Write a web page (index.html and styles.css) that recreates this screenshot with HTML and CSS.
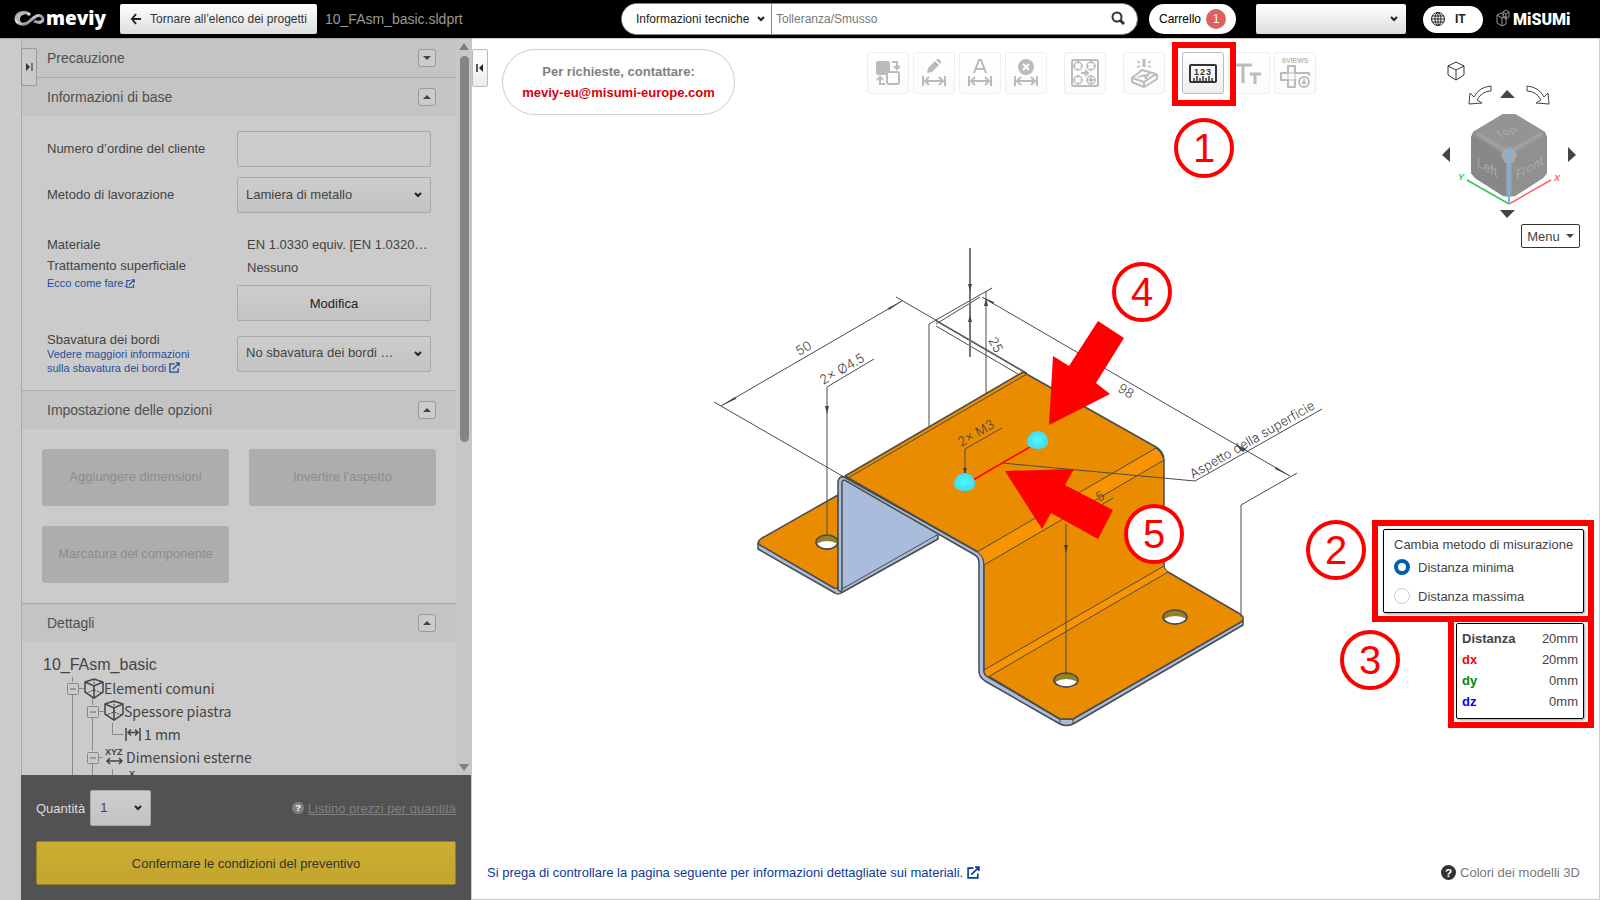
FILE: index.html
```html
<!DOCTYPE html>
<html lang="it">

<head>
  <meta charset="UTF-8" />
  <meta name="viewport" content="width=device-width, initial-scale=1.0" />
  <title>meviy - 10_FAsm_basic.sldprt</title>
  <link rel="stylesheet" href="styles.css">
</head>

<body>
  <!-- Header -->
  <header class="topbar">
    <a class="logo" href="#" aria-label="meviy">
      <svg width="98" height="28" viewBox="0 0 98 28">
        <defs>
          <linearGradient id="silver" x1="0" y1="0" x2="1" y2="1">
            <stop offset="0" stop-color="#77747c" />
            <stop offset="0.4" stop-color="#f0eef2" />
            <stop offset="0.7" stop-color="#8d8a92" />
            <stop offset="1" stop-color="#e4e2e6" />
          </linearGradient>
        </defs>
        <path d="M16 10C12 6 3 6 2 13c0 7 9 8 14 3s9-7 12-4c3 4-2 7-8 4" fill="none" stroke="url(#silver)" stroke-width="3" />
        <path d="M13 9C8 5 1 8 2 14c1 3 3 5 6 4-4-3-2-9 5-9z" fill="#b9b6be" />
        <text x="32" y="20" class="logo-text">meviy</text>
      </svg>
    </a>
    <button class="back" type="button">
      <svg width="12" height="12" viewBox="0 0 12 12"><path d="M6 1L2 6l4 5M2 6h9" fill="none" stroke="#222" stroke-width="2" /></svg>
      Tornare all’elenco dei progetti
    </button>
    <span class="file-name">10_FAsm_basic.sldprt</span>

    <form class="search">
      <select class="select" aria-label="Categoria">
        <option>Informazioni tecniche</option>
      </select>
      <input type="text" placeholder="Tolleranza/Smusso" aria-label="Cerca" />
      <button type="button" aria-label="Cerca">
        <svg width="14" height="14" viewBox="0 0 14 14"><circle cx="6" cy="6" r="4.5" fill="none" stroke="#333" stroke-width="2" /><path d="M9 9l4 4" stroke="#333" stroke-width="3" /></svg>
      </button>
    </form>

    <button class="cart" type="button">Carrello <span class="badge">1</span></button>
    <select class="select account" aria-label="Account">
      <option></option>
    </select>
    <button class="lang" type="button">
      <svg width="14" height="14" viewBox="0 0 14 14" fill="none" stroke="#222"><circle cx="7" cy="7" r="6.5" /><ellipse cx="7" cy="7" rx="3" ry="6.5" /><path d="M7 0v14M0 7h14M1 4h12M1 10h12" /></svg>
      IT
    </button>
    <a class="misumi" href="#" aria-label="MiSUMi">
      <svg width="84" height="24" viewBox="0 0 84 24">
        <path d="M1 8l5 3v8l-5-3zM6 11l4-2v8l-4 2M1 8l4-2 3 2M7 5l3-2 3 2v5l-3 2-3-2zM7 5l3 2 3-2M10 7v5" fill="none" stroke="#999" />
        <text x="17" y="18" class="misumi-text">MiSUMi</text>
      </svg>
    </a>
  </header>

  <main>
    <!-- Side panel -->
    <aside class="sidebar">
      <div class="panel-wrap">
        <button class="tab tab-left" type="button" aria-label="Espandi">
          <svg width="8" height="8" viewBox="0 0 8 8"><path d="M1 0l4 4-4 4z" fill="#333" /><path d="M7 0v8" stroke="#777" stroke-width="2" /></svg>
        </button>
        <div class="panel">
          <section>
            <h2>Precauzione <button class="toggle closed" type="button" aria-label="Apri"></button></h2>
          </section>

          <section>
            <h2>Informazioni di base <button class="toggle" type="button" aria-label="Chiudi"></button></h2>
            <div class="form">
              <div class="row">
                <label for="orderNo">Numero d’ordine del cliente</label>
                <input id="orderNo" type="text" />
              </div>
              <div class="row">
                <label for="method">Metodo di lavorazione</label>
                <select id="method" class="select">
                  <option>Lamiera di metallo</option>
                </select>
              </div>
              <div class="row material">
                <div class="names">
                  <p>Materiale</p>
                  <p>Trattamento superficiale</p>
                  <a href="#">Ecco come fare.<svg class="ext" width="9" height="9" viewBox="0 0 12 12"><use href="#ext" /></svg></a>
                </div>
                <div class="values">
                  <p>EN 1.0330 equiv. [EN 1.0320…</p>
                  <p>Nessuno</p>
                  <button class="modify" type="button">Modifica</button>
                </div>
              </div>
              <div class="row burr">
                <div>
                  <label for="burr">Sbavatura dei bordi</label>
                  <a href="#">Vedere maggiori informazioni sulla sbavatura dei bordi <svg class="ext" width="11" height="11" viewBox="0 0 12 12"><use href="#ext" /></svg></a>
                </div>
                <select id="burr" class="select">
                  <option>No sbavatura dei bordi …</option>
                </select>
              </div>
            </div>
          </section>

          <section>
            <h2>Impostazione delle opzioni <button class="toggle" type="button" aria-label="Chiudi"></button></h2>
            <div class="options">
              <button type="button" disabled>Aggiungere dimensioni</button>
              <button type="button" disabled>Invertire l’aspetto</button>
              <button type="button" disabled>Marcatura del componente</button>
            </div>
          </section>

          <section>
            <h2>Dettagli <button class="toggle" type="button" aria-label="Chiudi"></button></h2>
            <div class="tree">
              <p class="tree-title">10_FAsm_basic</p>
              <ul>
                <li>
                  <svg width="61" height="23"><path class="line" d="M29.5 0v5M29.5 18v5M36 11.5h5M49.5 20v3" /><use href="#minus" x="24" y="6" /><use href="#cube" x="41" y="1" /></svg>Elementi comuni
                </li>
                <li>
                  <svg width="81" height="23"><path class="line" d="M29.5 0v23M49.5 0v5M49.5 18v5M56 11.5h5" /><use href="#minus" x="44" y="6" /><use href="#cube" x="61" y="0" /></svg>Spessore piastra
                </li>
                <li>
                  <svg width="101" height="23"><path class="line" d="M29.5 0v23M49.5 0v23M69.5 0v11.5h11" /><path d="M83 5v13M97 5v13M85 9.5h10M88 6.5l-3 3 3 3M92 6.5l3 3-3 3" fill="none" stroke="#444" stroke-width="1.5" /></svg>1 mm
                </li>
                <li>
                  <svg width="83" height="23"><path class="line" d="M29.5 0v23M49.5 0v5M49.5 18v5M56 11.5h4" /><use href="#minus" x="44" y="6" /><text x="62" y="9">XYZ</text><path d="M64 15h15M67 12l-3 3 3 3M76 12l3 3-3 3" fill="none" stroke="#444" stroke-width="1.5" /></svg>Dimensioni esterne
                </li>
                <li>
                  <svg width="101" height="23"><path class="line" d="M29.5 0v23M49.5 0v23M69.5 0v23" /><text x="86" y="8">X</text></svg>
                </li>
              </ul>
            </div>
          </section>
        </div>
        <div class="scrollbar"><i class="up"></i><i class="thumb"></i><i class="down"></i></div>
      </div>

      <div class="order">
        <div class="quantity">
          <label for="qty">Quantità</label>
          <select id="qty" class="select">
            <option>1</option>
          </select>
          <a href="#"><svg width="12" height="12" viewBox="0 0 14 14"><use href="#help" /></svg><u>Listino prezzi per quantità</u></a>
        </div>
        <button class="confirm" type="button">Confermare le condizioni del preventivo</button>
      </div>
    </aside>

    <!-- 3D viewer -->
    <div class="viewer">
      <svg class="model" viewBox="472 39 1127 860">
        <g stroke="#4a4a4a" stroke-width="1.5" stroke-linejoin="round">
          <!-- left flange -->
          <path d="M758 543v6l77 44q3 2 6 0l97-54v-4z" fill="#a9bcdc" />
          <path d="M762 538l76-43v91q0 3-4 2l-74-43q-4-3 2-7z" fill="#ea8c00" />
          <ellipse cx="827" cy="542" rx="11" ry="7" fill="#948126" />
          <path d="M816 544q11-6 22 0q-3 5-11 5t-11-5z" fill="#fff" stroke="none" />
          <path d="M842 480v109l97-55z" fill="#a9bcdc" stroke="none" />
          <path d="M842 589l95-54" fill="none" stroke-width="1" />
          <!-- front edge of the sheet -->
          <path d="M838 590V483q0-7 6-6l134 75q6 4 6 12v107q0 4 4 6l72 42h13l170-99v5l-170 99q-7 3-13 0l-75-43q-6-4-6-10V564q0-7-4-9L846 481q-4-2-4 2v106q0 4-4 1z" fill="#a9bcdc" />
          <!-- top, side and bottom faces -->
          <path d="M845 476l178-104 133 75q8 5 8 13v106q0 4 4 6l72 42q6 4 1 8l-168 97h-13l-72-43q-4-2-4-6V564q0-8-6-12z" fill="#ea8c00" />
          <path d="M977 552l179-104q6 4 8 12L984 565q0-9-7-13z" fill="#f79400" stroke-width="1" />
          <path d="M984 670l180-104q1 4 4 6L988 677q-4-2-4-7z" fill="#f79400" stroke-width="1" />
          <path d="M848 478l179-104" stroke-width="1" />
          <ellipse cx="1175" cy="617" rx="12" ry="7" fill="#948126" />
          <path d="M1164 619q11-6 23 0q-3 5-12 5t-11-5z" fill="#fff" stroke="none" />
          <ellipse cx="1066" cy="680" rx="12" ry="7" fill="#948126" />
          <path d="M1055 682q11-6 23 0q-3 5-12 5t-11-5z" fill="#fff" stroke="none" />
          <path d="M816 542a11 7 0 0 0 22 0M1163 617a12 7 0 0 0 24 0M1054 680a12 7 0 0 0 24 0" fill="none" />
          <path d="M1060 720v4M1073 720v4" stroke-width="1" />
        </g>

        <!-- dimension lines -->
        <g class="dim">
          <path d="M714 402l130 75M721 406l181-105M896 297l131 76" />
          <path d="M827 536V387l47-28M929 426V324l63-36M936 324l44-27M936 326l82 48M936 321l91 53M986 291v102" />
          <path d="M982 297l308 179M1297 473l-56 32v112" />
          <path d="M1002 463l193 18 127-72M965 476v-27l37-21M1066 675V524M1093 510l20-12" />
          <path d="M970 248v109" stroke="#777" stroke-width="2" />
          <path class="tip" d="M825 406h4l-2 8zM968 284h4l-2 7zM968 322h4l-2-7zM963 468h4l-2 7zM1064 545h4l-2 8zM984 306h4l-2-8zM721 406l14-9 1 2zM902 301l-14 7 1 2zM982 297l12 5-1 2zM1290 476l-14-9-1 2zM1236 445l10 4-3 3z" />
          <text transform="translate(799 356) rotate(-30)">50</text>
          <text transform="translate(823 385) rotate(-30)">2× Ø4.5</text>
          <text transform="translate(961 447) rotate(-30)">2× M3</text>
          <text transform="translate(988 340) rotate(62)">25</text>
          <text transform="translate(1117 391) rotate(30)">98</text>
          <text transform="translate(1099 502) rotate(-30)">5</text>
          <text transform="translate(1193 479) rotate(-30)">Aspetto della superficie</text>
        </g>

        <!-- measured points -->
        <defs>
          <radialGradient id="point">
            <stop offset="0" stop-color="#50f6ff" />
            <stop offset="1" stop-color="#44dcf0" />
          </radialGradient>
        </defs>
        <path d="M973 480l57-33" stroke="red" stroke-width="1.5" />
        <path id="dome" d="M954 484c0-6 5-11 11-11s10 5 10 11c0 5-5 7-10 7s-11-2-11-7z" fill="url(#point)" />
        <use href="#dome" x="73" y="-42" />

        <!-- callouts -->
        <path d="M1098 321l26 17-28 45 14 11-61 31 4-69 16 10zM1005 471l69-2-9 16 48 25-15 29-47-26-9 16z" fill="red" />
        <g class="callout-svg">
          <circle cx="1142" cy="292" r="28" />
          <text x="1142" y="306">4</text>
          <circle cx="1154" cy="534" r="28" />
          <text x="1154" y="548">5</text>
        </g>
      </svg>

      <div class="viewer-top">
        <button class="tab tab-right" type="button" aria-label="Riduci">
          <svg width="8" height="8" viewBox="0 0 8 8"><path d="M7 0L3 4l4 4z" fill="#222" /><path d="M1 0v8" stroke="#222" stroke-width="1.5" /></svg>
        </button>
        <div class="contact">
          <p>Per richieste, contattare:</p>
          <a href="#">meviy-eu@misumi-europe.com</a>
        </div>

        <div class="toolbar">
          <div class="group">
            <button type="button" disabled aria-label="Sostituisci">
              <svg viewBox="1 1 40 40"><rect x="9" y="9" width="14" height="14" rx="2" class="solid" /><rect x="20" y="20" width="12" height="12" rx="2" fill="#fdfdfd" /><path d="M25 10h5v6M27 14l3 3 3-3M18 32h-5v-6M10 28l3-3 3 3" /></svg>
            </button>
            <button type="button" disabled aria-label="Modifica quota">
              <svg viewBox="1 1 40 40"><use href="#width" /><path class="solid" d="M14 21l1-5 7-7 4 4-7 7zM23 8l1-1q2 0 3 1t1 3l-1 1z" /></svg>
            </button>
            <button type="button" disabled aria-label="Testo quota">
              <svg viewBox="1 1 40 40"><use href="#width" /><path d="M15 21l5-13h2l5 13M17 17h8" /></svg>
            </button>
            <button type="button" disabled aria-label="Elimina quota">
              <svg viewBox="1 1 40 40"><use href="#width" /><circle cx="21" cy="15" r="8" class="solid" /><path d="M18 12l6 6M24 12l-6 6" stroke="#fff" /></svg>
            </button>
          </div>
          <div class="group">
            <button type="button" disabled aria-label="Fori">
              <svg viewBox="1 1 40 40"><rect x="8" y="8" width="26" height="26" rx="2" /><path d="M17 21h7M21 18l3 3-3 3" />
                <g stroke-width="1.5"><circle cx="14" cy="14" r="4" /><circle cx="27" cy="14" r="4" /><circle cx="14" cy="28" r="4" /><circle cx="27" cy="28" r="4" /></g>
                <circle cx="27" cy="28" r="2" class="solid" />
                <path d="M14 9v3M14 16v3M9 14h3M16 14h3M27 9v3M27 16v3M22 14h3M29 14h3M14 23v3M14 30v3M9 28h3M16 28h3M22 28h10M27 23v10" stroke-width="1" />
              </svg>
            </button>
          </div>
          <div class="group">
            <button type="button" disabled aria-label="Marcatura">
              <svg viewBox="1 1 40 40"><path d="M9 26l10-8 14 4-12 8zM9 26v4l12 5 13-8v-5M21 30v5" stroke-linejoin="round" /><path d="M15 25l11-3-4 5M19 23l5 3" stroke-width="1.5" /><path d="M21 7v8" stroke-width="3" /><path d="M14 9l3 2M28 9l-3 2M14 15l3-1M28 15l-3-1" stroke-width="1.5" /></svg>
            </button>
          </div>
          <div class="group">
            <div class="marked">
              <button class="active" type="button" aria-label="Misura">
                <svg viewBox="1 1 40 40"><rect x="8" y="13" width="26" height="17" rx="1" /><text x="12" y="23">123</text><path d="M12 29v-3M15 29v-5M18 29v-3M21 29v-5M24 29v-3M27 29v-5M30 29v-3" stroke-width="1.5" /></svg>
              </button>
              <span class="callout one">1</span>
            </div>
            <button type="button" disabled aria-label="Testo">
              <svg viewBox="1 1 40 40"><path d="M7 13h17M15 13v18M22 22h11M27 22v10" stroke-width="3" /></svg>
            </button>
            <button type="button" disabled aria-label="6 viste">
              <svg viewBox="1 1 40 40"><text x="8" y="11" class="small">6VIEWS</text><path d="M14 14h7v7h14v7H21v7h-7v-7H7v-7h7z" stroke-linejoin="round" /><path d="M14 21h7v7h-7zM28 21v4" stroke-width="1" /><circle cx="30" cy="30" r="8" fill="#fdfdfd" stroke="none" /><circle cx="30" cy="30" r="5" fill="#fdfdfd" /><path d="M30 27v5M28 30l2 2 2-2" stroke-width="1.5" /></svg>
            </button>
          </div>
        </div>
      </div>

      <!-- view cube -->
      <div class="navigator">
        <svg width="140" height="160" viewBox="1440 60 140 160">
          <path d="M1456 62l8 4v9l-8 5-8-5v-9zM1448 66l8 4 8-4M1456 70v10" fill="#fff" stroke="#333" />
          <path id="turn" d="M1491 86q-12 1-17 11l-4-4-1 11 13-1-5-3q5-9 14-9z" fill="#fff" stroke="#444" />
          <use href="#turn" transform="matrix(-1 0 0 1 3018 0)" />
          <path d="M1500 98l7-8 8 8zM1500 210h15l-8 8zM1450 147v15l-8-7zM1568 147v15l8-7z" fill="#444" />
          <path d="M1503 114h12l30 18 2 5v36l-4 5-28 18h-12l-28-18-4-5v-36l2-5z" fill="#8c8c8c" />
          <path d="M1473 132l30-18h12l30 18-2 7-34 20z" fill="#949494" />
          <path d="M1471 137l7 4 31 18v38l-6-1-28-18-4-5z" fill="#878787" />
          <path d="M1509 159l34-20 4-2v36l-4 5-28 18-6 1z" fill="#909090" />
          <path d="M1477 134l28 16M1541 134l-28 16" stroke="#a0a0a0" stroke-width="4" />
          <path d="M1509 160v36" stroke="#9c9c9c" stroke-width="6" />
          <path d="M1505 149h8l4 6-4 8h-8l-4-8z" fill="#a9a9a9" />
          <g class="cube-text">
            <text transform="matrix(0.87 -0.3 0.5 0.6 1498 138)">Top</text>
            <text transform="matrix(0.87 0.5 0 1 1477 166)">Left</text>
            <text transform="matrix(0.87 -0.5 0 1 1516 180)">Front</text>
          </g>
          <path d="M1509 204l-42-24" stroke="#2fc656" stroke-width="1.5" />
          <path d="M1509 204l42-24" stroke="#f66" stroke-width="1.5" />
          <path d="M1509 204v-51" stroke="#72b4f4" stroke-width="2" />
          <g class="axis">
            <text x="1458" y="180" fill="#2fc656">Y</text>
            <text x="1554" y="181" fill="#f66">X</text>
            <text x="1506" y="153" fill="#72b4f4">Z</text>
          </g>
        </svg>
        <button class="menu" type="button">Menu <i></i></button>
      </div>

      <!-- measurement -->
      <div class="measure">
        <div class="frame method-frame">
          <span class="callout two">2</span>
          <fieldset class="box">
            <legend>Cambia metodo di misurazione</legend>
            <label><input type="radio" name="distance" checked /> Distanza minima</label>
            <label><input type="radio" name="distance" /> Distanza massima</label>
          </fieldset>
        </div>
        <div class="frame result-frame">
          <span class="callout three">3</span>
          <div class="box">
            <table>
              <tr><th>Distanza</th><td>20mm</td></tr>
              <tr class="dx"><th>dx</th><td>20mm</td></tr>
              <tr class="dy"><th>dy</th><td>0mm</td></tr>
              <tr class="dz"><th>dz</th><td>0mm</td></tr>
            </table>
          </div>
        </div>
      </div>

      <footer class="viewer-bottom">
        <a href="#">Si prega di controllare la pagina seguente per informazioni dettagliate sui materiali. <svg class="ext" width="13" height="13" viewBox="0 0 12 12"><use href="#ext" /></svg></a>
        <span><svg width="15" height="15" viewBox="0 0 14 14"><use href="#help" /></svg> Colori dei modelli 3D</span>
      </footer>
    </div>
  </main>

  <!-- shared icons -->
  <svg class="symbols" width="0" height="0">
    <defs>
      <g id="ext" fill="none" stroke="currentColor" stroke-width="1.5"><path d="M6 2H1v9h9V7M4 8l7-7M7.5 1H11v3.5" /></g>
      <g id="help"><circle cx="7" cy="7" r="7" fill="currentColor" /><text x="7" y="11" class="help-mark">?</text></g>
      <g id="minus" fill="none" stroke="#888"><rect x="0.5" y="0.5" width="11" height="11" rx="1" /><path d="M3 6h6" stroke-width="1.5" /></g>
      <g id="cube" fill="none" stroke="#444" stroke-width="1.5"><path d="M1 4l9-3 9 3v10l-9 6-9-6zM1 4l9 4 9-4M10 8v12" /><path d="M10 1v11l-8 3M10 12l8 3" stroke-width="1" stroke-dasharray="2 1" /></g>
      <g id="width" stroke-width="2"><path d="M10 24v10M32 24v10M12 29h18M16 25l-4 4 4 4M26 25l4 4-4 4" /></g>
    </defs>
  </svg>
</body>

</html>
```
FILE: styles.css
```css
* {
  box-sizing: border-box;
}

body {
  margin: 0;
  height: 100vh;
  display: flex;
  flex-direction: column;
  font-family: "Liberation Sans", Arial, sans-serif;
  font-size: 13px;
  color: #444;
  overflow: hidden;
}

button,
input,
select {
  font: inherit;
  color: inherit;
  margin: 0;
}

p,
h2,
ul {
  margin: 0;
  padding: 0;
}

.select {
  appearance: none;
  background: url("data:image/svg+xml,%3Csvg xmlns='http://www.w3.org/2000/svg' width='8' height='6' viewBox='0 0 8 6'%3E%3Cpath d='M1 1l3 3 3-3' fill='none' stroke='%23222' stroke-width='2'/%3E%3C/svg%3E") no-repeat right 8px center, linear-gradient(#cdcdcd, #c3c3c3);
  border: 1px solid #a9a9a9;
  border-radius: 2px;
  padding: 0 8px;
}

/* Header */
.topbar {
  height: 38px;
  flex: none;
  display: flex;
  align-items: center;
  background: #000;
  padding: 0 20px 0 14px;
  font-size: 12px;
  white-space: nowrap;
}

.logo {
  width: 106px;
  height: 28px;
}

.logo-text {
  font-family: "Open Sans", sans-serif;
  font-weight: 800;
  font-size: 19px;
  fill: #fff;
}

.back {
  width: 197px;
  height: 30px;
  display: flex;
  align-items: center;
  justify-content: center;
  gap: 8px;
  border: 0;
  border-radius: 2px;
  background: linear-gradient(#fff, #ddd);
  color: #333;
  padding: 0;
}

.file-name {
  margin-left: 8px;
  font-size: 14px;
  color: #999;
}

.search {
  display: flex;
  width: 517px;
  height: 32px;
  margin-left: auto;
  background: #fff;
  border: 1px solid #888;
  border-radius: 16px;
  overflow: hidden;
}

.search .select {
  width: 150px;
  flex: none;
  border: 0;
  border-right: 1px solid #888;
  border-radius: 0;
  background-color: #fff;
  background-size: 8px 6px, 0 0;
  background-position: right 6px center, 0 0;
  padding-left: 14px;
  padding-right: 16px;
  color: #222;
}

.search input {
  flex: 1;
  border: 0;
  padding: 0 4px;
}

.search input::placeholder {
  color: #777;
}

.search button {
  border: 0;
  background: none;
  padding: 0 12px;
}

.cart {
  width: 87px;
  height: 30px;
  display: flex;
  align-items: center;
  justify-content: center;
  gap: 5px;
  border: 0;
  border-radius: 15px;
  background: #fff;
  color: #000;
  margin-left: 11px;
  padding: 0;
}

.badge {
  width: 20px;
  line-height: 20px;
  border-radius: 50%;
  background: #e06060;
  color: #fff;
}

.account {
  width: 150px;
  height: 30px;
  margin: 0 17px 0 20px;
  border: 0;
  background-image: url("data:image/svg+xml,%3Csvg xmlns='http://www.w3.org/2000/svg' width='8' height='6' viewBox='0 0 8 6'%3E%3Cpath d='M1 1l3 3 3-3' fill='none' stroke='%23222' stroke-width='2'/%3E%3C/svg%3E"), linear-gradient(#fff, #ddd);
}

.lang {
  width: 60px;
  height: 27px;
  display: flex;
  align-items: center;
  gap: 10px;
  border: 0;
  border-radius: 14px;
  background: #fff;
  color: #222;
  font-weight: bold;
  padding: 0 8px;
}

.misumi {
  margin-left: 13px;
  height: 24px;
}

.misumi-text {
  font-family: "Liberation Sans Narrow", Roboto, sans-serif;
  font-weight: 900;
  font-size: 16px;
  fill: #fff;
}

main {
  flex: 1;
  min-height: 0;
  display: flex;
}

/* Side panel */
.sidebar {
  width: 472px;
  flex: none;
  display: flex;
  flex-direction: column;
  background: #cbcbcb;
  border-top: 1px solid #aaa;
  padding-left: 21px;
}

.panel-wrap {
  position: relative;
  flex: 1;
  min-height: 0;
  display: flex;
  border-left: 1px solid #aaa;
}

.tab {
  width: 16px;
  height: 38px;
  display: flex;
  align-items: center;
  justify-content: center;
  border: 1px solid #999;
  border-radius: 2px;
  padding: 0;
}

.tab-left {
  position: absolute;
  left: -1px;
  top: 9px;
  background: #c9c9c9;
}

.tab-right {
  background: linear-gradient(#fff, #eee);
  border-color: #bbb;
}

.panel {
  flex: 1;
  overflow: hidden;
}

.panel h2 {
  height: 38px;
  display: flex;
  align-items: center;
  justify-content: space-between;
  padding: 0 20px 0 25px;
  background: #c4c4c4;
  font-size: 14px;
  font-weight: normal;
  color: #505050;
}

.panel section + section {
  border-top: 1px solid #aaa;
}

.toggle {
  width: 18px;
  height: 18px;
  display: flex;
  align-items: center;
  justify-content: center;
  border: 1px solid #999;
  border-radius: 3px;
  background: #cbcbcb;
  padding: 0;
}

.toggle::before {
  content: "";
  border: 4px solid transparent;
  border-top-width: 0;
  border-bottom-color: #444;
}

.toggle.closed::before {
  border-top: 4px solid #444;
  border-bottom-width: 0;
}

.form {
  padding: 15px 25px;
}

.row {
  display: grid;
  grid-template-columns: 190px 1fr;
  align-items: center;
  margin-bottom: 10px;
}

.row label {
  padding-bottom: 2px;
}

.row input,
.row .select,
.modify {
  width: 100%;
  height: 36px;
  border: 1px solid #a9a9a9;
  border-radius: 2px;
}

.row .select {
  padding-bottom: 2px;
}

.row input {
  background: #cbcbcb;
}

.row a {
  display: block;
  font-size: 11px;
  line-height: 14px;
  color: #264f9c;
  text-decoration: none;
}

.ext {
  vertical-align: -1px;
}

.material {
  margin: 20px 0 11px;
  align-items: start;
}

.material p {
  line-height: 21px;
}

.material .names {
  padding-top: 1px;
}

.material .values p {
  line-height: 23px;
  padding-left: 10px;
}

.modify {
  display: block;
  margin-top: 6px;
  background: linear-gradient(#cdcdcd, #c3c3c3);
  color: #222;
}

.burr {
  margin-bottom: 0;
}

.burr label {
  display: block;
  line-height: 15px;
  padding: 0;
}

.burr a {
  width: 150px;
}

.options {
  display: grid;
  grid-template-columns: 1fr 1fr;
  gap: 20px;
  padding: 20px;
}

.options button {
  height: 57px;
  border: 0;
  border-radius: 3px;
  background: #adadad;
  color: #8c8c8c;
  padding: 0 0 2px;
}

.tree {
  padding: 10px 20px 0 21px;
}

.tree-title {
  font-size: 16px;
  line-height: 25px;
}

.tree ul {
  list-style: none;
  font-family: "Noto Sans CJK JP", sans-serif;
  font-size: 14px;
}

.tree li {
  height: 23px;
  display: flex;
  align-items: center;
  white-space: nowrap;
  line-height: 23px;
}

.tree svg {
  overflow: visible;
}

.tree .line {
  fill: none;
  stroke: #888;
}

.tree text {
  font-family: "Liberation Sans", sans-serif;
  font-size: 9px;
  font-weight: bold;
  fill: #444;
}

.scrollbar {
  width: 16px;
  display: flex;
  flex-direction: column;
  align-items: center;
  background: #c7c7c7;
  padding: 4px 0;
}

.scrollbar .up,
.scrollbar .down {
  border: 5px solid transparent;
  border-top-width: 0;
  border-bottom: 7px solid #808080;
}

.scrollbar .down {
  border-top: 7px solid #808080;
  border-bottom-width: 0;
  margin-top: auto;
}

.scrollbar .thumb {
  width: 9px;
  height: 53%;
  margin-top: 6px;
  border-radius: 5px;
  background: #848484;
}

.order {
  background: #525252;
  margin-right: 1px;
  padding: 15px;
}

.quantity {
  display: flex;
  align-items: center;
  color: #ddd;
  margin-bottom: 15px;
}

.quantity .select {
  width: 61px;
  height: 36px;
  margin-left: 5px;
  padding-left: 9px;
  padding-bottom: 2px;
  color: #444;
}

.quantity a {
  display: flex;
  align-items: center;
  gap: 4px;
  margin-left: auto;
  color: #808080;
  text-decoration: none;
}

.help-mark {
  font-size: 11px;
  font-weight: bold;
  text-anchor: middle;
  fill: #fff;
}

.confirm {
  display: block;
  width: 100%;
  height: 44px;
  border: 1px solid #967f24;
  border-radius: 2px;
  background: linear-gradient(#cbae30, #c3a530);
  color: #333;
}

/* Viewer */
.viewer {
  position: relative;
  flex: 1;
  border: 1px solid #ccc;
  border-left: 0;
  background: #fff;
}

.model {
  display: block;
  width: 100%;
  height: 100%;
}

.dim {
  fill: none;
  stroke: #4a4a4a;
}

.dim text {
  font-family: Inter, sans-serif;
  font-weight: 300;
  font-size: 13px;
  fill: #444;
  stroke: none;
}

.tip {
  fill: #444;
  stroke: none;
}

.callout-svg {
  font-size: 40px;
  text-anchor: middle;
  fill: red;
}

.callout-svg circle {
  fill: #fff;
  stroke: red;
  stroke-width: 4;
}

.callout {
  position: absolute;
  width: 60px;
  height: 60px;
  border: 4px solid red;
  border-radius: 50%;
  background: #fff;
  color: red;
  font-size: 40px;
  line-height: 52px;
  text-align: center;
}

.viewer-top {
  position: absolute;
  top: 10px;
  left: 0;
  right: 0;
  display: flex;
  align-items: flex-start;
}

.contact {
  width: 233px;
  height: 66px;
  margin-left: 14px;
  border: 1px solid #ccc;
  border-radius: 33px;
  padding-top: 11px;
  text-align: center;
  font-weight: bold;
  line-height: 21px;
  color: #808080;
}

.contact a {
  color: #d7000f;
  text-decoration: none;
}

.toolbar {
  display: flex;
  gap: 17px;
  margin: 3px 283px 0 auto;
}

.group {
  display: flex;
  gap: 4px;
}

.toolbar button {
  display: block;
  width: 42px;
  height: 42px;
  border: 1px solid #eee;
  border-radius: 3px;
  background: linear-gradient(#fff, #fbfbfb);
  padding: 0;
}

.toolbar svg {
  display: block;
  width: 40px;
  height: 40px;
  fill: none;
  stroke: #bbb;
  stroke-width: 2;
}

.toolbar .solid {
  fill: #bbb;
  stroke: none;
}

.toolbar text {
  font-size: 9px;
  font-weight: bold;
  letter-spacing: 1px;
  fill: #333;
  stroke: none;
}

.toolbar .small {
  font-size: 7px;
  letter-spacing: 0;
  fill: #bbb;
}

.toolbar .active {
  border-color: #bbb;
  background: linear-gradient(#fff, #eee);
}

.toolbar .active svg {
  stroke: #333;
}

.marked {
  position: relative;
}

.marked::after {
  content: "";
  position: absolute;
  inset: -10px -12px -12px -10px;
  border: 6px solid red;
  z-index: 1;
}

.one {
  top: 66px;
  left: -8px;
}

.navigator {
  position: absolute;
  top: 21px;
  right: 19px;
  display: flex;
  flex-direction: column;
  align-items: flex-end;
}

.cube-text {
  font-family: Inter, sans-serif;
  font-size: 13px;
  fill: #aaa;
}

.axis {
  font-size: 9px;
  font-weight: bold;
  font-style: italic;
}

.menu {
  width: 59px;
  height: 24px;
  margin-top: 4px;
  display: flex;
  align-items: center;
  justify-content: center;
  gap: 6px;
  border: 1px solid #333;
  border-radius: 2px;
  background: #fff;
  padding: 0;
}

.menu i {
  border: 4px solid transparent;
  border-top-color: #444;
  border-bottom-width: 0;
}

/* Measurement */
.measure {
  position: absolute;
  right: 5px;
  bottom: 171px;
  display: flex;
  flex-direction: column;
  align-items: flex-end;
}

.frame {
  position: relative;
  border: 6px solid red;
  background: #fff;
}

.method-frame {
  width: 222px;
  padding: 3px 4px 3px 5px;
}

.result-frame {
  width: 146px;
  margin-top: -6px;
  padding: 1px 4px 3px 2px;
}

.box {
  margin: 0;
  border: 1px solid #000;
  border-radius: 2px;
  box-shadow: 1px 1px 3px #999;
}

fieldset.box {
  padding: 7px 10px 8px;
}

.box legend {
  float: left;
  padding: 0;
  line-height: 16px;
  white-space: nowrap;
}

.box label {
  clear: both;
  display: flex;
  align-items: center;
  gap: 8px;
  height: 16px;
  margin-top: 13px;
}

.box legend + label {
  margin-top: 0;
  padding-top: 6px;
  height: 22px;
}

.box input {
  appearance: none;
  width: 16px;
  height: 16px;
  border: 1px solid #ccc;
  border-radius: 50%;
}

.box input:checked {
  border: 4px solid #0060b0;
}

.box table {
  width: 100%;
  border-collapse: collapse;
  margin: 4px 0 6px;
}

.box th,
.box td {
  height: 21px;
  padding: 0 5px;
  text-align: left;
}

.box td {
  text-align: right;
}

.dx th {
  color: #f00;
}

.dy th {
  color: #080;
}

.dz th {
  color: #00f;
}

.two {
  top: -6px;
  left: -72px;
}

.three {
  top: 8px;
  left: -114px;
}

.viewer-bottom {
  position: absolute;
  left: 15px;
  right: 19px;
  bottom: 19px;
  display: flex;
  justify-content: space-between;
  color: #777;
}

.viewer-bottom a {
  color: #0b3b99;
  text-decoration: none;
}

.viewer-bottom span svg {
  color: #333;
  vertical-align: -3px;
}

.viewer-bottom .ext {
  vertical-align: -2px;
}

.symbols {
  position: absolute;
}
```
